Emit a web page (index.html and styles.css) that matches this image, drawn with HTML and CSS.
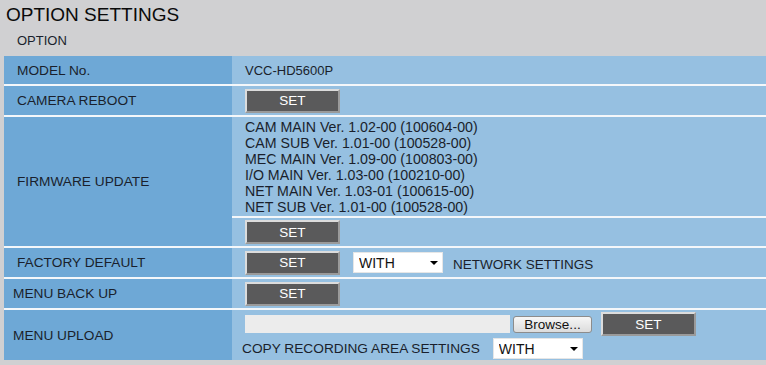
FILE: index.html
```html
<!DOCTYPE html>
<html>
<head>
<meta charset="utf-8">
<link rel="stylesheet" href="styles.css">
</head>
<body>
<div class="page">
  <h1 class="title">OPTION SETTINGS</h1>
  <div class="subtitle">OPTION</div>
  <div class="grid">
    <div class="row r-model">
      <div class="label ind">MODEL No.</div>
      <div class="value">VCC-HD5600P</div>
    </div>
    <div class="row r-std">
      <div class="label ind">CAMERA REBOOT</div>
      <div class="value"><button class="set">SET</button></div>
    </div>
    <div class="row r-fw">
      <div class="label ind">FIRMWARE UPDATE</div>
      <div class="value fw">
        <div class="fw-list">
          <div>CAM MAIN Ver. 1.02-00 (100604-00)</div>
          <div>CAM SUB Ver. 1.01-00 (100528-00)</div>
          <div>MEC MAIN Ver. 1.09-00 (100803-00)</div>
          <div>I/O MAIN Ver. 1.03-00 (100210-00)</div>
          <div>NET MAIN Ver. 1.03-01 (100615-00)</div>
          <div>NET SUB Ver. 1.01-00 (100528-00)</div>
        </div>
        <div class="fw-btn"><button class="set">SET</button></div>
      </div>
    </div>
    <div class="row r-std">
      <div class="label ind">FACTORY DEFAULT</div>
      <div class="value">
        <button class="set">SET</button>
        <span class="sel sel-net"><select><option>WITH</option><option>WITHOUT</option></select></span>
        <span class="net-text">NETWORK SETTINGS</span>
      </div>
    </div>
    <div class="row r-std">
      <div class="label">MENU BACK UP</div>
      <div class="value"><button class="set">SET</button></div>
    </div>
    <div class="row r-up">
      <div class="label">MENU UPLOAD</div>
      <div class="value up">
        <div class="up-line1">
          <span class="file-input"></span>
          <button class="browse">Browse...</button>
          <button class="set">SET</button>
        </div>
        <div class="up-line2">
          <span class="copy-text">COPY RECORDING AREA SETTINGS</span>
          <span class="sel"><select><option>WITH</option><option>WITHOUT</option></select></span>
        </div>
      </div>
    </div>
  </div>
</div>
</body>
</html>
```

FILE: styles.css
```css
html, body {
  margin: 0;
  padding: 0;
  background: #d0d0d2;
  font-family: "Liberation Sans", Arial, sans-serif;
  color: #1a1f2c;
  overflow: hidden;
}

.page {
  width: 766px;
  height: 365px;
}

.title {
  margin: 0;
  padding: 4px 0 0 6px;
  font-size: 19px;
  line-height: 22px;
  font-weight: normal;
  color: #0a0a0a;
}

.subtitle {
  margin-top: 7px;
  padding-left: 17px;
  font-size: 13px;
  line-height: 16px;
}

.grid {
  margin: 7px 0 0 4px;
  width: 762px;
  display: flex;
  flex-direction: column;
  gap: 2px;
  background: #f4f7fa;
}

.row {
  display: grid;
  grid-template-columns: 228px 1fr;
  font-size: 13px;
}

.r-model { height: 28px; }
.r-std { height: 29px; }
.r-fw { height: 129px; }
.r-up { height: 50px; }

.label {
  background: #6ea8d6;
  display: flex;
  align-items: center;
  padding-left: 9px;
  font-size: 13.7px;
}

.label.ind {
  padding-left: 13px;
}

.value {
  background: #96c0e1;
  display: flex;
  align-items: center;
  padding-left: 13px;
}

.set {
  box-sizing: border-box;
  width: 95px;
  height: 24px;
  margin: 0;
  padding: 0;
  background: #5a5a5b;
  color: #ffffff;
  font-family: "Liberation Sans", Arial, sans-serif;
  font-size: 13.5px;
  border: 2px solid;
  border-color: #dcdcdc #9a9a9a #9a9a9a #dcdcdc;
}

.fw {
  flex-direction: column;
  align-items: stretch;
  padding-left: 0;
  gap: 2px;
  background: #f4f7fa;
}

.fw-list {
  background: #96c0e1;
  height: 97px;
  padding: 2px 0 0 13px;
  line-height: 16px;
  font-size: 14.2px;
}

.fw-btn {
  background: #96c0e1;
  flex: 1;
  display: flex;
  align-items: center;
  padding-left: 13px;
}

.sel {
  position: relative;
  display: inline-block;
}

.sel select {
  appearance: none;
  -webkit-appearance: none;
  box-sizing: border-box;
  width: 90px;
  height: 21px;
  margin: 0;
  padding: 0 0 0 5px;
  border: 1px solid #e6e6e6;
  background: #ffffff;
  color: #111;
  font-family: "Liberation Sans", Arial, sans-serif;
  font-size: 14px;
}

.sel::after {
  content: "";
  position: absolute;
  right: 5px;
  top: 9px;
  border-left: 4px solid transparent;
  border-right: 4px solid transparent;
  border-top: 4px solid #000;
  pointer-events: none;
}

.sel-net {
  margin-left: 13px;
}

.net-text {
  margin-left: 10px;
  padding-top: 3px;
  font-size: 13.5px;
}

.up {
  flex-direction: column;
  align-items: stretch;
  padding-left: 0;
}

.up-line1 {
  display: flex;
  align-items: center;
  height: 24px;
  margin-top: 2px;
  padding-left: 13px;
}

.file-input {
  display: block;
  width: 265px;
  height: 18px;
  background: #ececec;
}

.browse {
  box-sizing: border-box;
  width: 79px;
  height: 17px;
  margin: 0 9px 0 3px;
  padding: 0;
  border: 1px solid #8c8c8c;
  border-radius: 3px;
  background: linear-gradient(#f6f6f6, #dcdcdc);
  color: #111;
  font-family: "Liberation Sans", Arial, sans-serif;
  font-size: 13.5px;
  line-height: 15px;
}

.up-line2 {
  display: flex;
  align-items: center;
  height: 21px;
  margin-top: 2px;
  padding-left: 10px;
  gap: 13px;
}

.copy-text {
  font-size: 13.7px;
}
```
